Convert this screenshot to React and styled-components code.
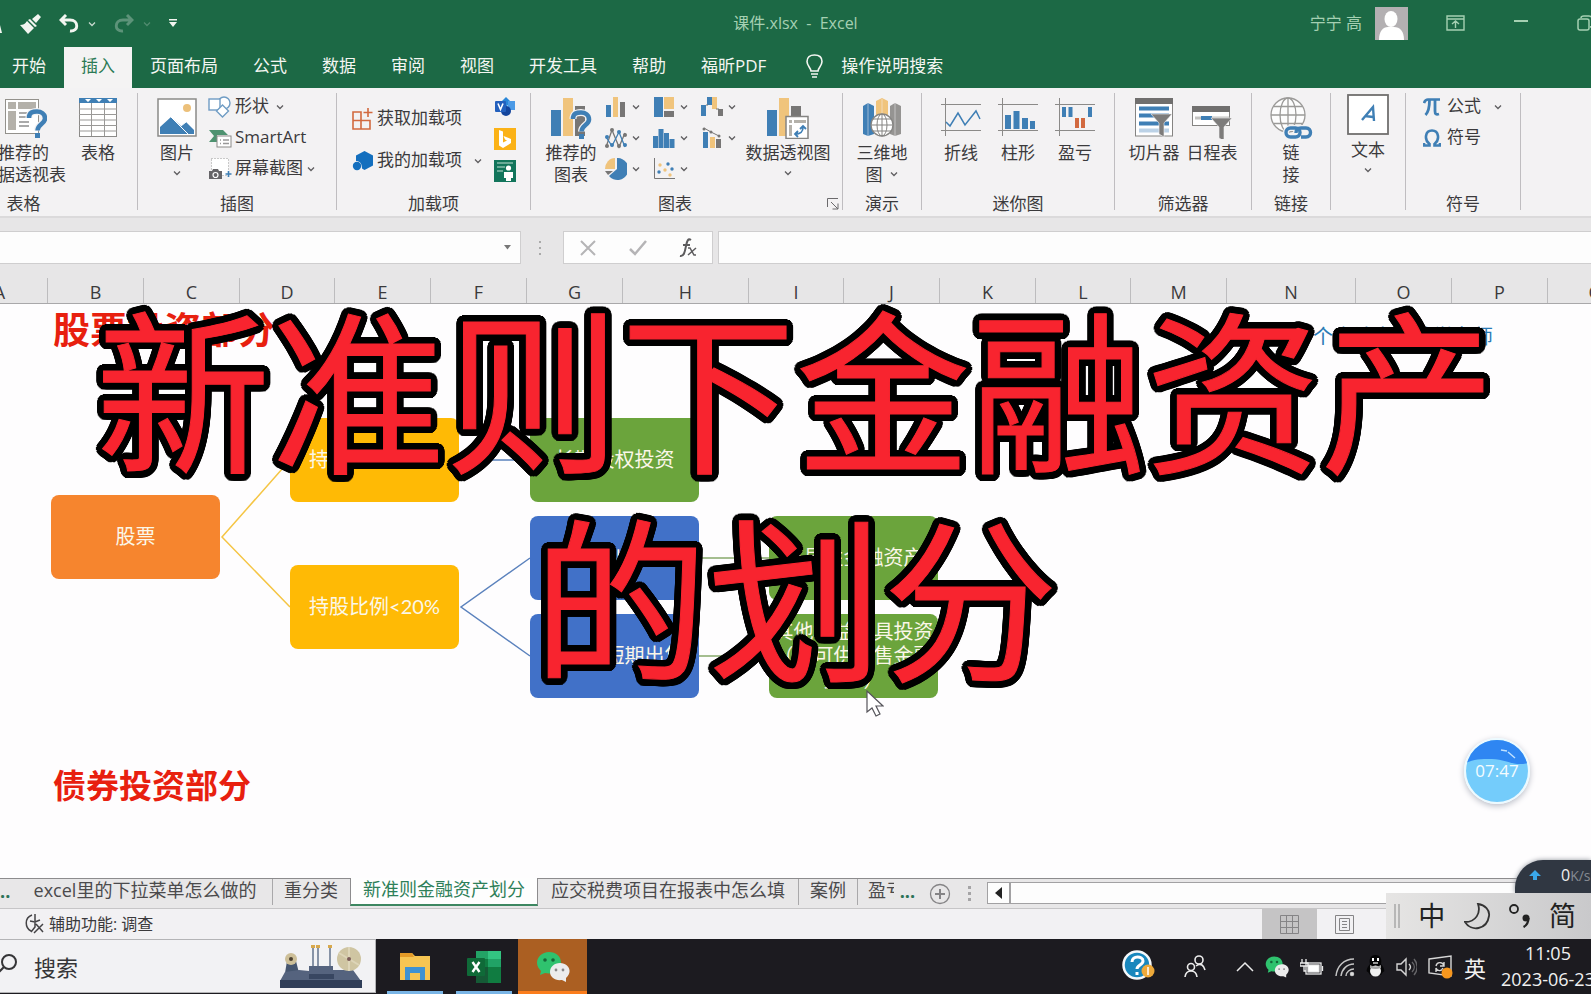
import React from 'react';
import styled, { createGlobalStyle, css } from 'styled-components';

const GlobalStyle = createGlobalStyle`
  *, *::before, *::after { box-sizing: border-box; }
  body { margin: 0; }
  body, button, input { font-family: 'Open Sans', 'Noto Sans CJK SC', sans-serif; }
  button { border: 0; padding: 0; background: none; color: inherit; font-size: inherit; line-height: inherit; }
  svg { display: block; flex: none; }
`;

const BLUE = '#3f7fb5';
const GOLD = '#f0c47c';
const GREY = '#777675';

const Page = styled.div`
  position: relative;
  display: flex;
  flex-direction: column;
  min-height: 100vh;
  overflow: hidden;
  font-size: 17px;
  color: #3b3a3c;
  background: #fefdfe;
`;

/* ---------- title bar and tabs ---------- */

const TitleBar = styled.header`
  display: grid;
  grid-template-columns: 1fr auto 1fr;
  align-items: center;
  height: 47px;
  background: #1c6945;
  color: #a5d0b2;
  font-size: 16px;
`;

const QuickAccess = styled.div`
  display: flex;
  align-items: center;
  gap: 8px;
`;

const QuickButton = styled.button`
  display: flex;
  align-items: center;
  gap: 8px;
  margin-right: 9px;
  color: #f2f5f0;
  opacity: ${(p) => (p.$dim ? 0.3 : 1)};
`;

const DocTitle = styled.div`
  white-space: pre;
  line-height: 24px;
  padding-bottom: 2px;
`;

const WindowTools = styled.div`
  display: flex;
  align-items: center;
  justify-content: flex-end;
  margin-right: -4px;
  padding-bottom: 1px;
  line-height: 32px;
`;

const Avatar = styled.svg`
  margin: 0 38px 0 13px;
`;

const WindowButton = styled.button`
  margin-right: ${(p) => p.$gap || 0}px;
`;

const TabRow = styled.nav`
  display: flex;
  gap: 1px;
  height: 41px;
  padding-right: 20px;
  margin-left: -5px;
  background: #1c6945;
  box-shadow: -5px 0 0 #1c6945;
  color: #f4f6f2;
  line-height: 36px;
`;

const Tab = styled.button`
  display: block;
  padding: 0 17px 4px;
  white-space: nowrap;
  ${(p) => p.$active && css`
    background: #f4f3f3;
    color: #2b7a55;
  `}
`;

const TellMe = styled.button`
  display: flex;
  align-items: center;
  gap: 18px;
  margin-left: 22px;
  padding-bottom: 4px;
`;

/* ---------- ribbon ---------- */

const RibbonRow = styled.section`
  display: flex;
  height: 128px;
  padding: 5px 0 6px;
  margin-left: -90px;
  background: #f3f2f3;
`;

const GroupBox = styled.div`
  display: flex;
  flex: none;
  flex-direction: column;
  width: ${(p) => p.$width}px;
  border-right: 1px solid #bfbdc0;
`;

const GroupBody = styled.div`
  display: flex;
  flex: 1;
  justify-content: ${(p) => p.$justify || 'flex-start'};
  gap: ${(p) => p.$gap || 0}px;
  padding: 0 ${(p) => p.$right || 0}px 0 ${(p) => p.$left || 0}px;
`;

const GroupLabel = styled.div`
  display: flex;
  height: 12px;
  line-height: 12px;
  span { flex: 1; text-align: center; }
  button { padding: 0 3px 0 8px; }
`;

const BigButton = styled.button`
  display: flex;
  flex-direction: column;
  align-items: center;
  width: ${(p) => p.$width}px;
  padding-top: ${(p) => (p.$raised ? 1 : 4)}px;
  line-height: 22px;
  white-space: nowrap;
  svg:first-child { margin-bottom: 3px; }
`;

const Caption = styled.span`
  display: flex;
  align-items: center;
  gap: 6px;
  min-height: 20px;
`;

const Stack = styled.div`
  display: flex;
  flex-direction: column;
  gap: ${(p) => p.$gap || 3}px;
  padding-top: ${(p) => p.$top || 0}px;
`;

const SmallButton = styled.button`
  display: flex;
  align-items: center;
  gap: ${(p) => p.$gap || 3}px;
  height: 28px;
  line-height: 24px;
  white-space: nowrap;
  svg:nth-of-type(2) { margin-left: ${(p) => p.$chev || 0}px; }
  span { padding-bottom: 2px; }
`;

const ChartGrid = styled.div`
  display: grid;
  grid-template-columns: repeat(3, 36px);
  grid-auto-rows: 28px;
  gap: 3px 12px;
  align-content: start;
`;

/* ---------- formula bar and headings ---------- */

const FormulaRow = styled.div`
  display: flex;
  align-items: center;
  height: 62px;
  padding-bottom: 1px;
  border-top: 2px solid #dbdadb;
  background: #e7e6e7;
`;

const NameBox = styled.div`
  display: flex;
  align-items: center;
  width: 521px;
  height: 33px;
  padding-right: 8px;
  background: #fdfdfd;
  border: 1px solid #cfcecf;
  border-left: 0;
  input { flex: 1; min-width: 0; border: 0; background: none; outline: 0; }
`;

const Dots = styled.svg`
  margin: 0 20px 0 17px;
`;

const FormulaButtons = styled.div`
  display: flex;
  align-items: center;
  justify-content: space-between;
  width: 150px;
  height: 33px;
  padding: 0 15px;
  margin-right: 5px;
  background: #fdfdfd;
  border: 1px solid #cfcecf;
`;

const FormulaInput = styled.input`
  flex: 1;
  height: 33px;
  background: #fdfdfd;
  border: 1px solid #cfcecf;
  border-right: 0;
  outline: 0;
`;

const ColumnRow = styled.div`
  display: flex;
  height: 26px;
  margin-left: -48px;
  background: #e7e6e7;
  border-bottom: 1px solid #a9a8aa;
`;

const ColumnHead = styled.div`
  flex: none;
  width: ${(p) => p.$width}px;
  border-right: 1px solid #bdbcbe;
  text-align: center;
  line-height: 29px;
  font-size: 18px;
`;

/* ---------- sheet canvas ---------- */

const Sheet = styled.main`
  position: relative;
  flex: 1;
  min-height: 540px;
`;

const Heading = styled.h2`
  position: absolute;
  left: 53px;
  top: ${(p) => p.$top}px;
  margin: 0;
  font-size: ${(p) => p.$size}px;
  line-height: 40px;
  font-weight: 700;
  color: #e8200f;
`;

const Signature = styled.p`
  position: absolute;
  left: 1293px;
  top: 18px;
  margin: 0;
  font-size: 20px;
  line-height: 30px;
  color: #2a7ab5;
  white-space: nowrap;
`;

const Connectors = styled.svg`
  position: absolute;
  left: 0;
  top: 0;
`;

const Node = styled.div`
  position: absolute;
  left: ${(p) => p.$x}px;
  top: ${(p) => p.$y}px;
  display: flex;
  align-items: center;
  justify-content: center;
  width: 169px;
  height: 84px;
  padding-bottom: 2px;
  border-radius: 8px;
  background: ${(p) => p.$color};
  color: #fbf7e8;
  font-family: Lato, 'Noto Sans CJK SC', sans-serif;
  font-size: 20px;
  line-height: 24px;
  text-align: center;
  white-space: pre;
`;

const Headline = styled.h1`
  position: absolute;
  top: -24px;
  left: 50%;
  width: 1410px;
  margin: 0 0 0 -705px;
  font-family: 'Noto Sans CJK SC', sans-serif;
  font-size: 175px;
  font-weight: 400;
  line-height: 208px;
  text-align: center;
  color: #f8242f;
  -webkit-text-stroke: 1px #f8242f;
  text-shadow: ${Array.from({ length: 32 }, (_, i) => {
    const a = (i * Math.PI) / 16;
    return `${(7 * Math.cos(a)).toFixed(1)}px ${(7 * Math.sin(a)).toFixed(1)}px 0 #000`;
  }).join(', ')};
`;

const Cursor = styled.svg`
  position: absolute;
  left: 866px;
  top: 386px;
`;

const Bubble = styled.div`
  position: absolute;
  right: 61px;
  bottom: 74px;
  width: 66px;
  height: 66px;
  border: 2px solid #ecfaff;
  border-radius: 50%;
  overflow: hidden;
  box-shadow: 0 2px 6px #b9bcc6;
  span {
    position: absolute;
    inset: 0;
    text-align: center;
    line-height: 62px;
    font-size: 17px;
    color: #f4fcff;
  }
`;

/* ---------- sheet tabs and status ---------- */

const SheetTabs = styled.nav`
  display: flex;
  align-items: flex-start;
  height: 31px;
  border-top: 1px solid #8d8c8e;
  border-bottom: 1px solid #c6c5c7;
  background: #e8e7e8;
  font-size: 18px;
  line-height: 22px;
`;

const SheetTab = styled.button`
  flex: none;
  width: ${(p) => p.$width}px;
  height: 26px;
  padding-bottom: 4px;
  overflow: hidden;
  white-space: nowrap;
  color: #4b4a4c;
  border-right: 1px solid ${(p) => (p.$plain ? 'transparent' : '#a9a8aa')};
  ${(p) => p.$clipped && css`
    padding-left: 10px;
    text-align: left;
  `}
  ${(p) => p.$active && css`
    margin-top: -1px;
    height: 28px;
    background: #fefefe;
    color: #2e8059;
    border-right-color: #8d8c8e;
    border-left: 1px solid #8d8c8e;
    border-bottom: 2px solid #3d8761;
  `}
`;

const More = styled.span`
  width: ${(p) => p.$width}px;
  line-height: 24px;
  font-weight: 700;
  color: #2b7357;
`;

const AddSheet = styled.button`
  margin: 4px 17px 0 9px;
`;

const ScrollTrack = styled.div`
  display: flex;
  flex: 1;
  height: 22px;
  margin: 3px 0 0 15px;
  background: #fdfdfd;
  border: 1px solid #a2a1a3;
  border-right: 0;
  button {
    display: flex;
    align-items: center;
    justify-content: center;
    width: 23px;
    border-right: 2px solid #a2a1a3;
  }
`;

const StatusBar = styled.footer`
  display: flex;
  align-items: center;
  height: 30px;
  padding-left: 25px;
  background: #f2f1f3;
  font-size: 16px;
  > span { flex: 1; padding: 0 0 2px 4px; }
`;

const ViewButton = styled.button`
  display: flex;
  align-items: center;
  justify-content: center;
  width: 55px;
  height: 30px;
  background: ${(p) => (p.$active ? '#c5c4c5' : 'none')};
`;

const ImeSpacer = styled.div`
  width: 219px;
`;

/* ---------- floating widgets ---------- */

const SpeedWidget = styled.aside`
  position: absolute;
  right: 0;
  bottom: 101px;
  display: flex;
  align-items: center;
  width: 76px;
  height: 33px;
  padding: 0 0 3px 14px;
  border-radius: 28px 0 0 0;
  background: #303742;
  color: #f0f0f0;
  font-size: 16px;
  white-space: nowrap;
  overflow: hidden;
  box-shadow: 0 0 5px #8e929a;
  svg { margin-right: 20px; }
  small { font-size: 14px; color: #858a92; }
`;

const ImeBar = styled.aside`
  position: absolute;
  right: 0;
  bottom: 55px;
  display: flex;
  align-items: center;
  justify-content: space-between;
  width: 205px;
  height: 46px;
  padding: 0 15px 0 8px;
  background: linear-gradient(90deg, #e6e5e4, #c9c9cb);
  color: #222;
  font-size: 27px;
  line-height: 46px;
`;

/* ---------- taskbar ---------- */

const Taskbar = styled.footer`
  display: flex;
  height: 55px;
  background: #1c1b20;
  color: #f1f1f1;
`;

const SearchBox = styled.button`
  display: flex;
  align-items: center;
  gap: 16px;
  width: 376px;
  height: 54px;
  padding: 0 13px 0 0;
  margin-right: 4px;
  background: #f2f2f4;
  border: solid #b4b4b6;
  border-width: 1px 1px 1px 0;
  color: #353537;
  font-size: 22px;
  span { flex: 1; text-align: left; }
`;

const AppButton = styled.button`
  display: flex;
  align-items: center;
  justify-content: center;
  width: 69px;
  ${(p) => (p.$hot ? css`
    background: #ab5f22;
    box-shadow: inset 0 -3px 0 #fb7d1c;
  ` : css`
    background: linear-gradient(#79b5e6, #79b5e6) center bottom / 56px 3px no-repeat;
  `)}
`;

const Tray = styled.div`
  display: flex;
  align-items: center;
  gap: 11px;
  margin-left: auto;
`;

const TrayButton = styled.button`
  margin-right: ${(p) => p.$gap || 0}px;
  font-size: 22px;
`;

const Clock = styled.div`
  width: 96px;
  margin: 0 -5px 0 3px;
  padding-bottom: 2px;
  font-size: 18px;
  line-height: 26px;
  text-align: center;
  white-space: nowrap;
`;

/* ---------- icons ---------- */

const Chevron = () => (
  <svg width="10" height="8" viewBox="0 0 10 8" fill="none" stroke="currentColor" strokeWidth="1.3" opacity=".8">
    <path d="M2 2.5 5 5.5 8 2.5" />
  </svg>
);

const QuestionMark = ({ x, y }) => (
  <g transform={`translate(${x} ${y})`} fill="none">
    <path d="M2 8C2 2 6 1.500 10 1.500S18 4 18 8.500C18 14 10.500 14 10.500 20.500" stroke="#f3f2f3" strokeWidth="7" />
    <path d="M2 8C2 2 6 1.500 10 1.500S18 4 18 8.500C18 14 10.500 14 10.500 20.500" stroke={BLUE} strokeWidth="4.600" />
    <rect x="8" y="23" width="5" height="5" fill={BLUE} />
  </g>
);

const PivotHelpIcon = () => (
  <svg width="46" height="42" viewBox="0 0 46 42">
    <rect x="4.500" y="2.500" width="33" height="34" fill="#fff" stroke="#93918c" />
    <path d="M7 5h8v7H7zM17 5h18v7H17zM7 14h8v19H7z" fill="#b4b1aa" />
    <path d="M18 16h14M18 20h10M18 25h10M18 29h10" stroke="#aaa" strokeWidth="2" />
    <QuestionMark x={26} y={13} />
  </svg>
);

const TableIcon = () => (
  <svg width="40" height="42" viewBox="0 0 40 42">
    <rect x="1.500" y="1.500" width="37" height="38" fill="#fff" stroke="#8b8a88" />
    <rect x="1" y="1" width="38" height="5" fill={BLUE} />
    <path d="M7 2h6l-3 3zM18 2h6l-3 3zM29 2h6l-3 3z" fill="#fff" />
    <path d="M1 12h38M1 17.500h38M1 23h38M1 28.500h38M1 34h38M13.500 6v33M26.500 6v33" stroke="#9a9997" />
  </svg>
);

const PictureIcon = () => (
  <svg width="40" height="42" viewBox="0 0 40 42">
    <rect x="1" y="2" width="38" height="37" fill="#fff" stroke="#8b8a88" strokeWidth="1.500" />
    <circle cx="30" cy="11" r="4" fill="#ecc07a" />
    <path d="M3 37v-7l11-10 10 9 5-4 8 8v4z" fill={BLUE} />
    <path d="M14 20 31 37M24 29l5-4" stroke="#fff" fill="none" />
  </svg>
);

const ShapesIcon = () => (
  <svg width="24" height="22" viewBox="0 0 24 22" fill="#fff" stroke="#6f9cc4" strokeWidth="1.400">
    <circle cx="16" cy="7" r="6" />
    <rect x="1" y="3" width="11" height="11" />
    <path d="m14.500 9 6 6-6 6-6-6z" />
  </svg>
);

const SmartArtIcon = () => (
  <svg width="24" height="22" viewBox="0 0 24 22">
    <path d="M1 3h14l5 5H9v7H1l5-6z" fill="#4e9270" />
    <rect x="9" y="9" width="14" height="11" fill="#fff" stroke="#8b8a88" />
    <path d="M12 13h1M15 13h6M12 16.500h1M15 16.500h6" stroke="#999" strokeWidth="1.300" />
  </svg>
);

const ScreenshotIcon = () => (
  <svg width="24" height="24" viewBox="0 0 24 24">
    <rect x="3.500" y="1.500" width="17" height="17" fill="#fff" stroke="#999" strokeDasharray="1 2" />
    <path d="M1 14h3l1-2h5l1 2h3v8H1z" fill="#666568" />
    <circle cx="7.500" cy="18" r="2.500" fill="none" stroke="#fff" strokeWidth="1.200" />
    <path d="M20.500 14v6M17.500 17h6" stroke={BLUE} strokeWidth="1.600" />
  </svg>
);

const GetAddinsIcon = () => (
  <svg width="22" height="24" viewBox="0 0 22 24" fill="none" stroke="#d2693f" strokeWidth="1.600">
    <path d="M1 5h8v17H1zM1 13.500h17V22H1M9 13.500h9M16 1v9M11.500 5.500h9" />
  </svg>
);

const MyAddinsIcon = () => (
  <svg width="22" height="22" viewBox="0 0 22 22" fill="#136fbe">
    <path d="m12.500 1 8.500 4.500v10L12.500 20 10 18.500C10 13 7.500 11 4 11V5.500z" />
    <circle cx="5" cy="16" r="4.200" />
  </svg>
);

const VisioIcon = () => (
  <svg width="22" height="20" viewBox="0 0 22 20">
    <path d="m12 0 5 5-5 5-5-5z" fill="#2b87d8" />
    <rect x="14" y="4" width="7" height="9" fill="#4b9ae6" />
    <circle cx="12" cy="14" r="5" fill="#14459c" />
    <rect x="1" y="4" width="11" height="11" rx="1" fill="#2360bd" />
    <path d="m4 6.500 2.500 6 2.500-6" fill="none" stroke="#fff" strokeWidth="1.600" />
  </svg>
);

const BingIcon = () => (
  <svg width="22" height="22" viewBox="0 0 22 22">
    <rect width="22" height="22" fill="#fbb216" />
    <path d="m5 2 4 1.500v11l4-2-2-1-1.500-3.500L17 11v4l-8 5-4-2.500z" fill="#fff" />
  </svg>
);

const PeopleGraphIcon = () => (
  <svg width="22" height="22" viewBox="0 0 22 22">
    <rect width="22" height="22" fill="#12755b" />
    <path d="M3 3h16M3 7h8M3 11h6" stroke="#bfe0d4" />
    <circle cx="14.500" cy="8" r="2.600" fill="#fff" />
    <path d="M10 12h9v6h-2v3h-5v-3h-2z" fill="#fff" />
  </svg>
);

const Bars = () => (
  <>
    <rect x="1" y="13" width="10" height="26" fill={BLUE} />
    <rect x="13" y="1" width="10" height="38" fill={GOLD} />
    <rect x="25" y="9" width="10" height="30" fill={GREY} />
  </>
);

const ChartHelpIcon = () => (
  <svg width="42" height="42" viewBox="0 0 42 42"><Bars /><QuestionMark x={21} y={14} /></svg>
);

const PivotChartIcon = () => (
  <svg width="44" height="42" viewBox="0 0 44 42">
    <Bars />
    <rect x="20" y="19.500" width="22" height="22" fill="#fff" stroke="#858482" strokeWidth="1.500" />
    <path d="M23 23h3v3h-3zM28 23h12v3H28zM23 28h3v11h-3z" fill="#b4b1aa" />
    <path d="M29 37c6 0 8-2 8-7M34 32l3-3 3 3M32 34l-3 3 3 3" fill="none" stroke={BLUE} strokeWidth="1.800" />
  </svg>
);

const CHART_SHAPES = {
  column: <><rect x="1" y="9" width="5" height="12" fill={BLUE} /><rect x="8" y="1" width="5" height="20" fill={GOLD} /><rect x="15" y="6" width="5" height="15" fill={GREY} /></>,
  tree: <><rect x="1" y="1" width="9" height="20" fill={BLUE} /><rect x="11" y="1" width="10" height="12" fill={GOLD} /><rect x="11" y="15" width="10" height="6" fill={GREY} /></>,
  waterfall: <><path d="M0 9h5v11H0zM6 1h5v8H6z" fill={BLUE} /><path d="M11 1h5v12h-5z" fill={GOLD} /><path d="M17 13h5v7h-5z" fill={GREY} /><path d="M5 9h2M15 13h3" stroke={GREY} /></>,
  line: <><path d="m1 20 6-17 7 17 6-14" fill="none" stroke={GREY} strokeWidth="1.300" /><path d="m1 10 6 9 7-14 6 15" fill="none" stroke={BLUE} strokeWidth="1.300" /><g fill={GREY}><circle cx="2" cy="19" r="2" /><circle cx="7" cy="3" r="2" /><circle cx="14" cy="19" r="2" /><circle cx="20" cy="8" r="2" /></g><g fill={BLUE}><circle cx="2" cy="10" r="2" /><circle cx="7" cy="18" r="2" /><circle cx="14" cy="5" r="2" /><circle cx="20" cy="18" r="2" /></g></>,
  histogram: <path d="M0 9h5v12H0zM5.500 2h5v19h-5zM11 6h5v15h-5zM16.500 12h5v9h-5z" fill={BLUE} />,
  combo: <><rect x="2" y="5" width="5" height="16" fill={BLUE} /><rect x="9" y="10" width="5" height="11" fill={GOLD} /><rect x="15" y="12" width="5" height="9" fill={GREY} /><path d="m3 1 7 4 8 4" fill="none" stroke={GREY} /><g fill={GREY}><circle cx="3" cy="2" r="1.500" /><circle cx="10" cy="5" r="1.500" /><circle cx="18" cy="9" r="1.500" /></g></>,
  pie: <><path d="M12 0a11 11 0 1 1-8 18l8-7z" fill={BLUE} /><path d="M10 0v11H0A10 11 0 0 1 10 0z" fill={GOLD} /><path d="M0 13h8l-5 4z" fill={GREY} /></>,
  scatter: <><path d="M1.500 0v20.500H22" fill="none" stroke={GREY} /><g fill={BLUE}><circle cx="6" cy="14" r="1.700" /><circle cx="15" cy="6" r="1.700" /><circle cx="19" cy="11" r="1.700" /></g><g fill={GOLD}><circle cx="7" cy="7" r="1.700" /><circle cx="12" cy="12" r="1.700" /><circle cx="17" cy="17" r="1.700" /></g></>,
};

const ChartIcon = ({ kind }) => (
  <svg width="22" height="22" viewBox="0 0 22 22">{CHART_SHAPES[kind]}</svg>
);

const MapIcon = () => (
  <svg width="40" height="42" viewBox="0 0 40 42">
    <path d="m1 9 5-3 6 3v28l-6 2-5-2z" fill={BLUE} />
    <path d="m14 4 6-3 6 3v20H14z" fill={GOLD} />
    <path d="m28 9 5-3 6 3v28l-6 2-5-2z" fill="#959492" />
    <path d="M6 6v33M33 6v33M20 2v20" stroke="#f3f2f3" strokeOpacity=".5" />
    <circle cx="20" cy="28" r="11" fill="#fff" stroke="#858482" strokeWidth="1.300" />
    <ellipse cx="20" cy="28" rx="5" ry="11" fill="none" stroke="#858482" />
    <path d="M9 28h22M20 17v22M11 22h18M11 34h18" stroke="#858482" />
  </svg>
);

const SparkIcon = ({ kind }) => (
  <svg width="40" height="42" viewBox="0 0 40 42">
    <path d="M4.500 1v38M0 7.500h40M0 33.500h40" stroke="#8b8a88" />
    {kind === 'line' && <path d="m5 25 4 4 8-13 7 12 11-14 4 8" fill="none" stroke={BLUE} strokeWidth="1.500" />}
    {kind === 'column' && <path d="M7 18h6v14H7zM15.500 14h6v18h-6zM24 21h6v11h-6zM32 24h5v8h-5z" fill={BLUE} />}
    {kind === 'winloss' && <><path d="M7 10h4v10H7zM13.500 10h4v10h-4zM33 10h4v10h-4z" fill={BLUE} /><path d="M20 21h4v10h-4zM26 21h4v10h-4z" fill="#d2693f" /></>}
  </svg>
);

const Funnel = ({ x, y }) => (
  <path transform={`translate(${x} ${y})`} d="M0 0h21l-8 9v14l-5-3V9z" fill="#7d7c7b" stroke="#f3f2f3" strokeWidth=".6" />
);

const SlicerIcon = () => (
  <svg width="40" height="42" viewBox="0 0 40 42">
    <rect x="1.500" y="2" width="37" height="37" fill="#fff" stroke="#858482" />
    <rect x="1" y="1" width="38" height="6" fill="#706f6e" />
    <path d="M5 11.500h30M5 18.500h30M5 26.500h30" stroke={BLUE} strokeWidth="4" />
    <path d="M5 33.500h30" stroke="#bcd2e6" strokeWidth="4" />
    <Funnel x={17} y={17} />
  </svg>
);

const TimelineIcon = () => (
  <svg width="42" height="42" viewBox="0 0 42 42">
    <rect x="1.500" y="9.500" width="37" height="19" fill="#fff" stroke="#858482" />
    <rect x="1" y="9" width="38" height="6" fill="#706f6e" />
    <path d="M4 21h34" stroke="#c4c3c1" strokeWidth="3" />
    <path d="M10 21h11" stroke={BLUE} strokeWidth="4" />
    <Funnel x={20} y={21} />
  </svg>
);

const LinkIcon = () => (
  <svg width="44" height="42" viewBox="0 0 44 42" fill="none">
    <g stroke="#9b9a98" strokeWidth="1.300">
      <circle cx="19" cy="18" r="17" fill="#fdfdfd" />
      <ellipse cx="19" cy="18" rx="8" ry="17" />
      <path d="M2 18h34M19 1v34M5 9.500h28M5 26.500h28" />
    </g>
    <g stroke="#f3f2f3" strokeWidth="6"><rect x="17" y="31" width="14" height="9" rx="4.500" /><rect x="27" y="31" width="14" height="9" rx="4.500" /></g>
    <g stroke={BLUE} strokeWidth="3.400"><rect x="17" y="31" width="14" height="9" rx="4.500" /><path d="M27 36c0-4 2-5 5-5h5c6 0 6 9 0 9h-5" /></g>
  </svg>
);

const TextBoxIcon = () => (
  <svg width="44" height="42" viewBox="0 0 44 42" fill="none">
    <rect x="2" y="1" width="40" height="39" fill="#fff" stroke="#706f6e" strokeWidth="1.800" />
    <path d="m16 26 11-13 1 14M19 22l8 1" stroke={BLUE} strokeWidth="2.400" />
  </svg>
);

const PiIcon = () => (
  <svg width="18" height="20" viewBox="0 0 18 20" fill="none" stroke={BLUE}>
    <path d="M1 6c1-3 2-3.500 4-3.500h12" strokeWidth="2.600" />
    <path d="M6.500 3c0 7-1 12-4 15M12 3v11c0 3 1 4 4 3" strokeWidth="2.800" />
  </svg>
);

const OmegaIcon = () => (
  <svg width="18" height="20" viewBox="0 0 18 20" fill="none" stroke={BLUE} strokeWidth="2.600">
    <path d="M1 15v2.500h5.500V16C1 12 2 2.500 9 2.500S17 12 11.500 16v1.500H17V15" />
  </svg>
);

const LauncherIcon = () => (
  <svg width="12" height="12" viewBox="0 0 12 12" fill="none" stroke="#6b6a6c">
    <path d="M.5 9V.5H11M4 4l7 7M11 5.500V11H5.500" />
  </svg>
);

const BrushIcon = () => (
  <svg width="22" height="20" viewBox="0 0 22 20" fill="currentColor">
    <path d="m12 5 6-5 3 3-5 6zM10 5l7 7-2 1-7-7zM7 7l7 7-6 6L0 11c3 0 5-1 7-4z" />
  </svg>
);

const UndoIcon = ({ flip }) => (
  <svg width="20" height="19" viewBox="0 0 20 19" fill="none" stroke="currentColor" strokeWidth="2.900">
    <g transform={flip ? 'translate(20 0) scale(-1 1)' : undefined}><path d="M7 1 2 6l5 5M2 6h9c9 0 9 12 0 11" /></g>
  </svg>
);

const WeChatIcon = ({ size }) => (
  <svg width={size} height={size} viewBox="0 0 34 34">
    <path d="M13 2C6 2 1 7 1 13c0 3 2 6 4 8l-1 4 5-2c9 2 16-3 16-10S20 2 13 2z" fill="#2fc26e" />
    <circle cx="9" cy="10" r="1.800" fill="#15683a" /><circle cx="17" cy="10" r="1.800" fill="#15683a" />
    <path d="M24 13c-6 0-10 4-10 9s5 9 12 8l4 2v-4c7-6 3-15-6-15z" fill="#ececec" />
    <circle cx="20" cy="20" r="1.400" fill="#888" /><circle cx="27" cy="20" r="1.400" fill="#888" />
  </svg>
);

const SteamPress = () => (
  <svg width="82" height="44" viewBox="0 0 82 44">
    <path d="M33 3v24M38 3v24M50 3v24" stroke="#8793a6" strokeWidth="2" />
    <path d="M31 1h4v3h-4zM36 1h4v3h-4zM48 1h4v3h-4z" fill="#d8a94e" />
    <path d="M7 17h9l3 12H5z" fill="#46566f" />
    <circle cx="11" cy="15" r="6" fill="#cdbf98" /><circle cx="11" cy="15" r="2" fill="#4b4030" />
    <path d="m5 28 14-2 10 1v-5h24v4h20l8 11H0z" fill="#55637e" />
    <rect x="29" y="30" width="25" height="5" fill="#384661" />
    <rect y="36" width="82" height="8" fill="#303e58" />
    <circle cx="69" cy="15" r="12" fill="#cfc5a2" /><path d="M69 3v24M59 9l20 12" stroke="#ddd5b8" strokeWidth="2" />
    <circle cx="69" cy="15" r="2" fill="#7b5b58" />
  </svg>
);

const FolderIcon = () => (
  <svg width="30" height="28" viewBox="0 0 30 28">
    <path d="M0 0h12l3 3h15v24H0z" fill="#f6c552" /><path d="M0 0h12l2 4H0z" fill="#e39a27" />
    <path d="M5 14h20v13h-5v-7h-10v7H5z" fill="#3e92d2" />
  </svg>
);

const ExcelIcon = () => (
  <svg width="34" height="32" viewBox="0 0 34 32">
    <path d="M9 0h12v16H9z" fill="#23a366" /><path d="M21 0h13v8H21z" fill="#33c481" />
    <path d="M9 8h12v8H9z" fill="#107c41" /><path d="M21 8h13v8H21z" fill="#21a366" />
    <path d="M9 16h12v16H9z" fill="#155a36" /><path d="M21 16h13v16H21z" fill="#107c41" />
    <rect y="7" width="18" height="18" rx="1" fill="#0f6a38" />
    <path d="m5.500 11 7 10M12.500 11l-7 10" stroke="#fff" strokeWidth="2.400" />
  </svg>
);

/* ---------- sections ---------- */

const TABS = ['开始', '插入', '页面布局', '公式', '数据', '审阅', '视图', '开发工具', '帮助', '福昕PDF'];

const COLUMNS = [
  ['A', 96], ['B', 96], ['C', 96], ['D', 95], ['E', 96], ['F', 96], ['G', 96], ['H', 126], ['I', 95],
  ['J', 96], ['K', 96], ['L', 95], ['M', 96], ['N', 129], ['O', 96], ['P', 96], ['Q', 96],
];

const ORANGE_BOX = '#f6852e';
const AMBER_BOX = '#ffba05';
const GREEN_BOX = '#6ba43c';
const BLUE_BOX = '#4171c8';

const NODES = [
  { x: 51, y: 191, color: ORANGE_BOX, text: '股票' },
  { x: 290, y: 114, color: AMBER_BOX, text: '持股比例≥20%' },
  { x: 290, y: 261, color: AMBER_BOX, text: '持股比例<20%' },
  { x: 530, y: 114, color: GREEN_BOX, text: '长期股权投资' },
  { x: 530, y: 212, color: BLUE_BOX, text: '短期出售' },
  { x: 530, y: 310, color: BLUE_BOX, text: '不准备短期出售' },
  { x: 769, y: 212, color: GREEN_BOX, text: '交易性金融资产' },
  { x: 769, y: 310, color: GREEN_BOX, text: '其他权益工具投资\n（原可供出售金融\n资产）' },
];

function Group({ width, label, launcher, children, ...body }) {
  return (
    <GroupBox $width={width}>
      <GroupBody {...body}>{children}</GroupBody>
      <GroupLabel>
        <span>{label}</span>
        {launcher && <button aria-label="图表选项"><LauncherIcon /></button>}
      </GroupLabel>
    </GroupBox>
  );
}

function Ribbon() {
  return (
    <RibbonRow>
      <Group width={228} label="表格" $justify="flex-end" $gap={3} $right={10}>
        <BigButton $width={85}><PivotHelpIcon /><Caption>推荐的</Caption><Caption>数据透视表</Caption></BigButton>
        <BigButton $width={58}><TableIcon /><Caption>表格</Caption></BigButton>
      </Group>
      <Group width={199} label="插图" $left={14} $gap={6}>
        <BigButton $width={50}><PictureIcon /><Caption>图片</Caption><Caption><Chevron /></Caption></BigButton>
        <Stack>
          <SmallButton $chev={3}><ShapesIcon /><span>形状</span><Chevron /></SmallButton>
          <SmallButton><SmartArtIcon /><span>SmartArt</span></SmallButton>
          <SmallButton><ScreenshotIcon /><span>屏幕截图</span><Chevron /></SmallButton>
        </Stack>
      </Group>
      <Group width={194} label="加载项" $left={15} $gap={11}>
        <Stack $gap={14} $top={12}>
          <SmallButton><GetAddinsIcon /><span>获取加载项</span></SmallButton>
          <SmallButton $chev={8}><MyAddinsIcon /><span>我的加载项</span><Chevron /></SmallButton>
        </Stack>
        <Stack $gap={4}>
          <SmallButton aria-label="Visio"><VisioIcon /></SmallButton>
          <SmallButton aria-label="Bing"><BingIcon /></SmallButton>
          <SmallButton aria-label="People Graph"><PeopleGraphIcon /></SmallButton>
        </Stack>
      </Group>
      <Group width={312} label="图表" launcher $left={14} $gap={8}>
        <BigButton $width={52}><ChartHelpIcon /><Caption>推荐的</Caption><Caption>图表</Caption></BigButton>
        <ChartGrid>
          {['column', 'tree', 'waterfall', 'line', 'histogram', 'combo', 'pie', 'scatter'].map((kind) => (
            <SmallButton key={kind} aria-label={kind} $gap={4}><ChartIcon kind={kind} /><Chevron /></SmallButton>
          ))}
        </ChartGrid>
        <BigButton $width={86}><PivotChartIcon /><Caption>数据透视图</Caption><Caption><Chevron /></Caption></BigButton>
      </Group>
      <Group width={79} label="演示" $justify="center">
        <BigButton $width={60}><MapIcon /><Caption>三维地</Caption><Caption>图<Chevron /></Caption></BigButton>
      </Group>
      <Group width={193} label="迷你图" $justify="center">
        <BigButton $width={57}><SparkIcon kind="line" /><Caption>折线</Caption></BigButton>
        <BigButton $width={57}><SparkIcon kind="column" /><Caption>柱形</Caption></BigButton>
        <BigButton $width={57}><SparkIcon kind="winloss" /><Caption>盈亏</Caption></BigButton>
      </Group>
      <Group width={137} label="筛选器" $justify="center">
        <BigButton $width={58}><SlicerIcon /><Caption>切片器</Caption></BigButton>
        <BigButton $width={58}><TimelineIcon /><Caption>日程表</Caption></BigButton>
      </Group>
      <Group width={79} label="链接" $justify="center">
        <BigButton $width={50}><LinkIcon /><Caption>链</Caption><Caption>接</Caption></BigButton>
      </Group>
      <Group width={75} $justify="center">
        <BigButton $width={50} $raised><TextBoxIcon /><Caption>文本</Caption><Caption><Chevron /></Caption></BigButton>
      </Group>
      <Group width={115} label="符号" $left={17}>
        <Stack>
          <SmallButton $gap={6} $chev={6}><PiIcon /><span>公式</span><Chevron /></SmallButton>
          <SmallButton $gap={6}><OmegaIcon /><span>符号</span></SmallButton>
        </Stack>
      </Group>
    </RibbonRow>
  );
}

function FormulaBar() {
  return (
    <FormulaRow>
      <NameBox>
        <input aria-label="名称框" />
        <button aria-label="展开名称框"><svg width="9" height="5"><path d="M1 0h7L4.500 4.500z" fill="#777" /></svg></button>
      </NameBox>
      <Dots width="5" height="16" fill="#aaa"><path d="M1 1h2v2H1zM1 7h2v2H1zM1 13h2v2H1z" /></Dots>
      <FormulaButtons>
        <button aria-label="取消"><svg width="18" height="16" fill="none" stroke="#b5b4b6" strokeWidth="2"><path d="m2 1 14 14M16 1 2 15" /></svg></button>
        <button aria-label="输入"><svg width="18" height="16" fill="none" stroke="#b5b4b6" strokeWidth="2.500"><path d="m1 9 5 5L17 1" /></svg></button>
        <button aria-label="插入函数">
          <svg width="18" height="20" fill="none" stroke="#5c5b5d" strokeWidth="2">
            <path d="M12 2C9 0 8 3 7 8S5 19 1 18M4 7h7" /><path d="m9 10 2 0 4 7h2M17 10l-8 7" strokeWidth="1.500" />
          </svg>
        </button>
      </FormulaButtons>
      <FormulaInput aria-label="编辑栏" />
    </FormulaRow>
  );
}

function Canvas() {
  return (
    <Sheet>
      <Heading $top={6} $size={37}>股票投资部分</Heading>
      <Signature>一个会计实务教学老师</Signature>
      <Connectors width="960" height="400" fill="none" strokeWidth="1.500">
        <path d="M290 156 222 233l68 70" stroke="#f5c544" />
        <path d="M459 156h71M530 254l-69 49 69 49" stroke="#5b82bd" />
        <path d="M699 254h70M699 352h70" stroke="#88a96c" />
      </Connectors>
      {NODES.map((n) => <Node key={n.text} $x={n.x} $y={n.y} $color={n.color}>{n.text}</Node>)}
      <Heading $top={462} $size={33}>债券投资部分</Heading>
      <Headline>新准则下金融资产的划分</Headline>
      <Cursor width="18" height="27" viewBox="0 0 18 27">
        <path d="M1 1v21l5-4 4 8 4-2-4-8h7z" fill="#fff" stroke="#55545a" strokeWidth="1.200" />
      </Cursor>
      <Bubble>
        <svg width="62" height="62" viewBox="0 0 62 62">
          <rect width="62" height="62" fill="#74ccfb" />
          <path d="M0 0h62v23c-14 4-22-4-36-4-12 0-18 0-26 4z" fill="#2f86f2" />
          <path d="M35 10l6 1M42 12l7 6" stroke="#bfe0ff" strokeWidth="1.500" />
        </svg>
        <span>07:47</span>
      </Bubble>
    </Sheet>
  );
}

function SheetBar() {
  return (
    <SheetTabs>
      <More $width={18}>..</More>
      <SheetTab $width={255}>excel里的下拉菜单怎么做的</SheetTab>
      <SheetTab $width={77} $plain>重分类</SheetTab>
      <SheetTab $width={188} $active>新准则金融资产划分</SheetTab>
      <SheetTab $width={261}>应交税费项目在报表中怎么填</SheetTab>
      <SheetTab $width={59}>案例</SheetTab>
      <SheetTab $width={37} $plain $clipped>盈亏</SheetTab>
      <More $width={25}>&nbsp;...</More>
      <AddSheet aria-label="新工作表">
        <svg width="22" height="22" fill="none" stroke="#858486" strokeWidth="1.300"><circle cx="11" cy="11" r="9.500" /><path d="M11 6v10M6 11h10" strokeWidth="2" /></svg>
      </AddSheet>
      <svg width="4" height="26" fill="#a5a4a6"><path d="M0 7h3v3H0zM0 13h3v3H0zM0 19h3v3H0z" /></svg>
      <ScrollTrack>
        <button aria-label="向左滚动"><svg width="7" height="12"><path d="M7 0v12L0 6z" fill="#222" /></svg></button>
      </ScrollTrack>
    </SheetTabs>
  );
}

function Status() {
  return (
    <StatusBar>
      <svg width="20" height="22" fill="none" stroke="#444346" strokeWidth="1.500">
        <path d="M7 2C-1 5 0 15 6 18M10 1v7M5 8l5 1 5-2M10 9v5l-4 5M11 11l7 8M18 11l-9 9" />
      </svg>
      <span>辅助功能: 调查</span>
      <ViewButton $active aria-label="普通视图">
        <svg width="19" height="19" fill="none" stroke="#858486"><path d="M.5.5h18v18H.5zM.5 6.500h18M.5 12.500h18M6.500.5v18M12.500.5v18" /></svg>
      </ViewButton>
      <ViewButton aria-label="页面布局视图">
        <svg width="19" height="19" fill="none" stroke="#858486"><path d="M.5.5h18v18H.5zM4.500 3.500h10v12h-10zM7 6.500h5M7 9.500h5M7 12.500h5" /></svg>
      </ViewButton>
      <ImeSpacer />
    </StatusBar>
  );
}

function Desktop() {
  return (
    <Taskbar>
      <SearchBox>
        <svg width="18" height="24" fill="none" stroke="#353537" strokeWidth="2"><circle cx="9" cy="8" r="7" /><path d="M4 13-4 21" /></svg>
        <span>搜索</span>
        <SteamPress />
      </SearchBox>
      <AppButton aria-label="文件资源管理器"><FolderIcon /></AppButton>
      <AppButton aria-label="Excel"><ExcelIcon /></AppButton>
      <AppButton $hot aria-label="微信"><WeChatIcon size={34} /></AppButton>
      <Tray>
        <TrayButton $gap={18} aria-label="帮助">
          <svg width="33" height="34" fill="none">
            <circle cx="15" cy="15" r="13.500" fill="#1887bd" stroke="#f4f8fa" strokeWidth="2.500" />
            <path d="M10 12c0-7 11-6 11-1 0 4-6 4-6 8M15 22v3" stroke="#fff" strokeWidth="3" />
            <circle cx="26" cy="21" r="6.500" fill="#eda93a" /><path d="M26 17v8" stroke="#fff" strokeWidth="1.500" />
          </svg>
        </TrayButton>
        <TrayButton $gap={19} aria-label="人脉">
          <svg width="22" height="24" fill="none" stroke="#ececec" strokeWidth="1.600"><circle cx="15" cy="5" r="4" /><circle cx="7" cy="12" r="3.500" /><path d="M1 22c1-8 11-8 12 0M12 11c5-4 8 0 9 4" /></svg>
        </TrayButton>
        <TrayButton aria-label="显示隐藏的图标">
          <svg width="18" height="12" fill="none" stroke="#ececec" strokeWidth="1.500"><path d="m1 10 8-8 8 8" /></svg>
        </TrayButton>
        <TrayButton aria-label="微信"><WeChatIcon size={24} /></TrayButton>
        <TrayButton aria-label="电池">
          <svg width="24" height="18" fill="none" stroke="#ececec" strokeWidth="1.300"><rect x="6" y="5" width="15" height="11" /><rect x="8" y="7" width="11" height="7" fill="#fff" /><path d="M22.500 8v5M2 1v4M6 1v4M0 5h8v3H0zM4 8v5h2" /></svg>
        </TrayButton>
        <TrayButton aria-label="网络">
          <svg width="20" height="20" fill="none" stroke="#c5c5c5" strokeWidth="1.500"><path d="M1 19C2 9 9 2 19 2M6 19C7 12 12 7 19 7M11 19c0-4 4-7 8-7" /><circle cx="17" cy="17" r="1.500" fill="#fff" /></svg>
        </TrayButton>
        <TrayButton aria-label="QQ">
          <svg width="19" height="23"><path d="M9.500 0C4 0 3 5 4 9c-4 5-4 8-2 8l2 3h11l2-3c2 0 2-3-2-8 1-4 0-9-5.500-9z" fill="#050506" /><ellipse cx="9.500" cy="16" rx="5.500" ry="5.500" fill="#f1f1f1" /><path d="M4 10q5.500 3 11 0v3q-5.500 2-11 0z" fill="#a5a5a5" /><path d="M7 3v3M12 3v3" stroke="#fff" strokeWidth="2" /><path d="M7 8h5" stroke="#ccc" strokeWidth="1.500" /></svg>
        </TrayButton>
        <TrayButton aria-label="音量">
          <svg width="21" height="20" fill="none" stroke="#d5d5d5" strokeWidth="1.400"><path d="M1 7h4l5-5v16l-5-5H1z" /><path d="M13 7c2 2 2 4 0 6" /><path d="M16 5c3 3 3 7 0 10M18 2c4 5 4 11 0 16" strokeOpacity=".4" /></svg>
        </TrayButton>
        <TrayButton aria-label="更新">
          <svg width="25" height="24" fill="none" stroke="#d8d8d8" strokeWidth="1.400"><path d="M1 4 23 1v20L1 18zM8 11c1-5 7-4 8 0M16 7v4h-4M15 13c-2 4-6 3-7 0v4" /><circle cx="19" cy="18" r="5.500" fill="#f7971e" stroke="none" /></svg>
        </TrayButton>
        <TrayButton>英</TrayButton>
        <Clock>11:05<br />2023-06-23</Clock>
      </Tray>
    </Taskbar>
  );
}

export default function App() {
  return (
    <Page>
      <GlobalStyle />
      <TitleBar>
        <QuickAccess>
          <QuickButton aria-label="打印预览">
            <svg width="3" height="20" fill="currentColor"><path d="M0 11l2 8H0z" /></svg>
          </QuickButton>
          <QuickButton aria-label="格式刷"><BrushIcon /></QuickButton>
          <QuickButton aria-label="撤消"><UndoIcon /><Chevron /></QuickButton>
          <QuickButton $dim aria-label="恢复"><UndoIcon flip /><Chevron /></QuickButton>
          <QuickButton aria-label="自定义快速访问工具栏">
            <svg width="8" height="9" fill="currentColor"><path d="M0 0h8v1.500H0zM0 3h8L4 8z" /></svg>
          </QuickButton>
        </QuickAccess>
        <DocTitle>课件.xlsx  -  Excel</DocTitle>
        <WindowTools>
          宁宁 高
          <Avatar width="33" height="33" viewBox="0 0 33 33">
            <rect width="33" height="33" fill="#b3b0b2" />
            <ellipse cx="16" cy="12" rx="6.500" ry="8" fill="#fff" />
            <path d="M4 33c0-9 4-13 9-13h6c6 0 10 4 10 13z" fill="#fff" />
          </Avatar>
          <WindowButton $gap={49} aria-label="功能区显示选项">
            <svg width="19" height="16" fill="none" stroke="currentColor" strokeWidth="1.400"><path d="M1 1h17v14H1zM1 4h17M9.500 13V6M6 9l3.500-3L13 9" /></svg>
          </WindowButton>
          <WindowButton $gap={49} aria-label="最小化">
            <svg width="14" height="8"><path d="M0 1h14v2H0z" fill="currentColor" /></svg>
          </WindowButton>
          <WindowButton aria-label="还原">
            <svg width="18" height="16" fill="none" stroke="currentColor" strokeWidth="1.500"><rect x="1" y="4" width="11" height="11" rx="2" /><path d="M4 3c0-1 1-2 3-2h5c2 0 3 1 3 3v6c0 1-1 2-2 2" /></svg>
          </WindowButton>
        </WindowTools>
      </TitleBar>
      <TabRow>
        {TABS.map((t) => <Tab key={t} $active={t === '插入'}>{t}</Tab>)}
        <TellMe>
          <svg width="17" height="24" fill="none" stroke="currentColor" strokeWidth="1.600"><path d="M5 17c0-3-4-5-4-9.500C1 3 4 1 8.500 1S16 3 16 7.500c0 4.500-4 6.500-4 9.500zM5 20h7M6 23h5" /></svg>
          操作说明搜索
        </TellMe>
      </TabRow>
      <Ribbon />
      <FormulaBar />
      <ColumnRow>
        {COLUMNS.map(([name, width]) => <ColumnHead key={name} $width={width}>{name}</ColumnHead>)}
      </ColumnRow>
      <Canvas />
      <SheetBar />
      <Status />
      <Desktop />
      <SpeedWidget>
        <svg width="12" height="12"><path d="M6 1 0 7h4v4h4V7h4z" fill="#3aa8ea" /></svg>
        0<small>K/s</small>
      </SpeedWidget>
      <ImeBar>
        <svg width="6" height="24" stroke="#8a8a8a"><path d="M1 0v24M5 0v24" /></svg>
        中
        <svg width="27" height="27" fill="none" stroke="#333" strokeWidth="1.800"><path d="M14 1c3 9-2 18-13 18 6 10 22 8 24-6C26 7 21 2 14 1z" /></svg>
        <svg width="22" height="24" fill="none" stroke="#222" strokeWidth="1.800"><circle cx="5" cy="5" r="4" /><circle cx="17" cy="14" r="3.500" fill="#222" stroke="none" /><path d="M19.500 14c0 4-1 7-5 9" strokeWidth="2.200" /></svg>
        简
      </ImeBar>
    </Page>
  );
}
